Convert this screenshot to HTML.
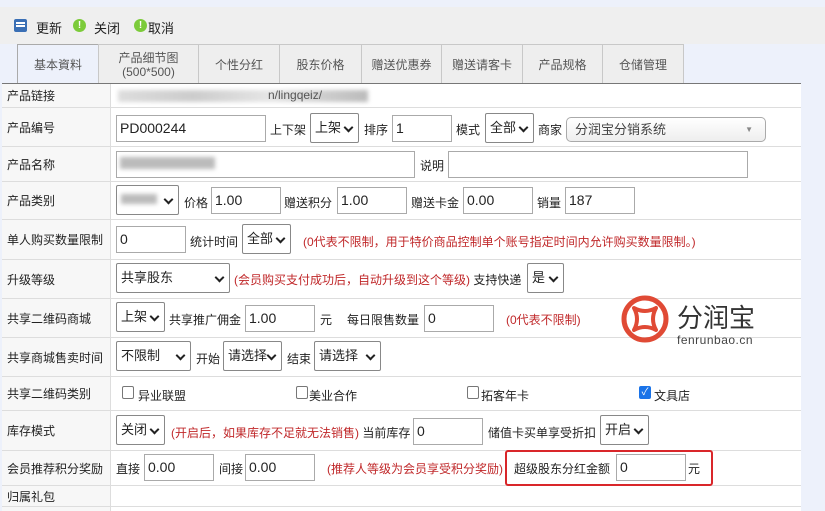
<!DOCTYPE html>
<html><head><meta charset="utf-8"><style>
*{margin:0;padding:0;box-sizing:border-box}
body{width:825px;height:511px;overflow:hidden;background:#edf1fb;font-family:"Liberation Sans","Noto Sans CJK SC",sans-serif;font-size:12px;color:#222;position:relative}
.a{position:absolute;white-space:nowrap}
.tb{left:0;top:7px;width:825px;height:37px;background:#efefef}
.tab{position:absolute;top:44px;height:40px;background:#eee;border:1px solid #c8c8c8;border-bottom:none;color:#555;font-size:12px;text-align:center;display:flex;align-items:center;justify-content:center;line-height:14px}
.tab.on{background:#edf1fb;border-color:#aaa}
.tbl{left:2px;top:83px;width:799px;height:428px;background:#fff;border-top:1px solid #777}
.row{position:absolute;left:2px;width:799px;border-bottom:1px solid #ddd}
.lab{position:absolute;left:2px;width:109px;background:#f7f7f7;border-right:1px solid #ddd;padding-left:5px;display:flex;align-items:center;font-size:12px}
.in{position:absolute;height:27px;border:1px solid #aaa;background:#fff;font-size:14px;padding-left:3px;line-height:25px}
.sel{position:absolute;height:30px;border:1px solid #888;border-radius:2px;background:#fff;font-size:13px;padding-left:4px;line-height:28px}
.sel:after{content:"";position:absolute;right:6px;top:10px;width:5px;height:5px;border-right:2px solid #222;border-bottom:2px solid #222;transform:rotate(45deg)}
.t{position:absolute;font-size:12px;white-space:nowrap}
.r{color:#c0282a}
.cb{position:absolute;width:12px;height:13px;border:1px solid #777;border-radius:2px;background:#fff}
</style></head><body>
<div class="a tb"></div>
<div class="a" style="left:14px;top:19px;width:13px;height:13px;background:#3a6fb5;border-radius:2px"><div style="margin:3px 2px;height:2px;background:#fff;box-shadow:0 3px 0 #fff"></div></div>
<div class="t" style="left:36px;top:18px;font-size:13px">更新</div>
<div class="a" style="left:73px;top:19px;width:13px;height:13px;border-radius:50%;background:#7ccb3a;color:#fff;font-size:10px;text-align:center;line-height:13px;font-weight:bold">!</div>
<div class="t" style="left:94px;top:18px;font-size:13px">关闭</div>
<div class="a" style="left:134px;top:19px;width:13px;height:13px;border-radius:50%;background:#7ccb3a;color:#fff;font-size:10px;text-align:center;line-height:13px;font-weight:bold">!</div>
<div class="t" style="left:148px;top:18px;font-size:13px">取消</div>

<div class="tab on" style="left:17px;width:82px">基本資料</div>
<div class="tab" style="left:98px;width:101px">产品细节图<br>(500*500)</div>
<div class="tab" style="left:198px;width:82px">个性分红</div>
<div class="tab" style="left:279px;width:83px">股东价格</div>
<div class="tab" style="left:361px;width:81px">赠送优惠券</div>
<div class="tab" style="left:441px;width:82px">赠送请客卡</div>
<div class="tab" style="left:522px;width:81px">产品规格</div>
<div class="tab" style="left:602px;width:82px">仓储管理</div>

<div class="a tbl"></div>
<!-- rows -->
<div class="row" style="top:84px;height:24px"></div><div class="lab" style="top:84px;height:23px">产品链接</div>
<div class="row" style="top:108px;height:39px"></div><div class="lab" style="top:108px;height:38px">产品编号</div>
<div class="row" style="top:147px;height:35px"></div><div class="lab" style="top:147px;height:34px">产品名称</div>
<div class="row" style="top:182px;height:38px"></div><div class="lab" style="top:182px;height:37px">产品类别</div>
<div class="row" style="top:220px;height:40px"></div><div class="lab" style="top:220px;height:39px">单人购买数量限制</div>
<div class="row" style="top:260px;height:39px"></div><div class="lab" style="top:260px;height:38px">升级等级</div>
<div class="row" style="top:299px;height:39px"></div><div class="lab" style="top:299px;height:38px">共享二维码商城</div>
<div class="row" style="top:338px;height:39px"></div><div class="lab" style="top:338px;height:38px">共享商城售卖时间</div>
<div class="row" style="top:377px;height:34px"></div><div class="lab" style="top:377px;height:33px">共享二维码类别</div>
<div class="row" style="top:411px;height:40px"></div><div class="lab" style="top:411px;height:39px">库存模式</div>
<div class="row" style="top:451px;height:35px"></div><div class="lab" style="top:451px;height:34px">会员推荐积分奖励</div>
<div class="row" style="top:486px;height:21px"></div><div class="lab" style="top:486px;height:20px">归属礼包</div>
<div class="lab" style="top:507px;height:4px"></div>

<!-- row 链接 blurred -->
<div class="a" style="left:118px;top:90px;width:250px;height:12px;background:linear-gradient(90deg,#ddd,#ccc 30%,#e5e5e5 60%,#bbb);filter:blur(2px)"></div>
<div class="t" style="left:268px;top:88px;color:#555">n/lingqeiz/</div>
<!-- 编号 -->
<div class="in" style="left:116px;top:115px;width:150px">PD000244</div>
<div class="t" style="left:270px;top:121px">上下架</div>
<div class="sel" style="left:310px;top:113px;width:49px">上架</div>
<div class="t" style="left:364px;top:121px">排序</div>
<div class="in" style="left:392px;top:115px;width:60px">1</div>
<div class="t" style="left:456px;top:121px">模式</div>
<div class="sel" style="left:485px;top:113px;width:49px">全部</div>
<div class="t" style="left:538px;top:121px">商家</div>
<div class="a" style="left:566px;top:117px;width:200px;height:25px;border:1px solid #aaa;border-radius:5px;background:linear-gradient(#fff,#eee);font-size:13px;padding-left:8px;line-height:23px;color:#444">分润宝分销系统<span style="position:absolute;right:12px;top:0;font-size:8px;color:#888">▼</span></div>
<!-- 名称 -->
<div class="in" style="left:116px;top:151px;width:299px"></div>
<div class="a" style="left:120px;top:157px;width:95px;height:12px;background:#bbb;filter:blur(2px)"></div>
<div class="t" style="left:420px;top:157px">说明</div>
<div class="in" style="left:448px;top:151px;width:300px"></div>
<!-- 类别 -->
<div class="sel" style="left:116px;top:185px;width:63px"><span style="display:inline-block;width:36px;height:10px;background:#bbb;filter:blur(2px)"></span></div>
<div class="t" style="left:184px;top:194px">价格</div>
<div class="in" style="left:211px;top:187px;width:70px">1.00</div>
<div class="t" style="left:284px;top:194px">赠送积分</div>
<div class="in" style="left:337px;top:187px;width:70px">1.00</div>
<div class="t" style="left:411px;top:194px">赠送卡金</div>
<div class="in" style="left:463px;top:187px;width:70px">0.00</div>
<div class="t" style="left:537px;top:194px">销量</div>
<div class="in" style="left:565px;top:187px;width:70px">187</div>
<!-- 单人 -->
<div class="in" style="left:116px;top:226px;width:70px">0</div>
<div class="t" style="left:190px;top:233px">统计时间</div>
<div class="sel" style="left:242px;top:224px;width:49px">全部</div>
<div class="t r" style="left:303px;top:233px">(0代表不限制，用于特价商品控制单个账号指定时间内允许购买数量限制。)</div>
<!-- 升级 -->
<div class="sel" style="left:116px;top:263px;width:114px">共享股东</div>
<div class="t" style="left:234px;top:271px"><span class="r">(会员购买支付成功后，自动升级到这个等级)</span> 支持快递</div>
<div class="sel" style="left:527px;top:263px;width:37px">是</div>
<!-- 商城 -->
<div class="sel" style="left:116px;top:302px;width:49px">上架</div>
<div class="t" style="left:169px;top:311px">共享推广佣金</div>
<div class="in" style="left:245px;top:305px;width:70px">1.00</div>
<div class="t" style="left:320px;top:311px">元</div>
<div class="t" style="left:347px;top:311px">每日限售数量</div>
<div class="in" style="left:424px;top:305px;width:70px">0</div>
<div class="t r" style="left:506px;top:311px">(0代表不限制)</div>
<!-- logo -->
<svg class="a" style="left:620px;top:294px" width="50" height="50" viewBox="0 0 50 50"><circle cx="25" cy="25" r="21" fill="none" stroke="#e04a35" stroke-width="5"/><path d="M14 14 Q25 20 36 14 Q30 25 36 36 Q25 30 14 36 Q20 25 14 14Z" fill="none" stroke="#e04a35" stroke-width="4" stroke-linejoin="round"/></svg>
<div class="t" style="left:677px;top:298px;font-size:26px;color:#333">分润宝</div>
<div class="t" style="left:677px;top:333px;font-size:12px;color:#444;letter-spacing:0.5px">fenrunbao.cn</div>
<!-- 售卖时间 -->
<div class="sel" style="left:116px;top:341px;width:75px">不限制</div>
<div class="t" style="left:196px;top:350px">开始</div>
<div class="sel" style="left:223px;top:341px;width:59px">请选择</div>
<div class="t" style="left:287px;top:350px">结束</div>
<div class="sel" style="left:314px;top:341px;width:67px">请选择</div>
<!-- 类别 cb -->
<div class="cb" style="left:122px;top:386px"></div><div class="t" style="left:138px;top:387px">异业联盟</div>
<div class="cb" style="left:296px;top:386px"></div><div class="t" style="left:309px;top:387px">美业合作</div>
<div class="cb" style="left:467px;top:386px"></div><div class="t" style="left:481px;top:387px">拓客年卡</div>
<div class="cb" style="left:639px;top:386px;background:#1a73e8;border-color:#1a73e8;color:#fff;font-size:10px;line-height:11px;text-align:center">✓</div><div class="t" style="left:654px;top:387px">文具店</div>
<!-- 库存 -->
<div class="sel" style="left:116px;top:415px;width:49px">关闭</div>
<div class="t" style="left:171px;top:424px"><span class="r">(开启后，如果库存不足就无法销售)</span> 当前库存</div>
<div class="in" style="left:413px;top:418px;width:70px">0</div>
<div class="t" style="left:488px;top:424px">储值卡买单享受折扣</div>
<div class="sel" style="left:600px;top:415px;width:49px">开启</div>
<!-- 会员 -->
<div class="t" style="left:116px;top:460px">直接</div>
<div class="in" style="left:144px;top:454px;width:70px">0.00</div>
<div class="t" style="left:219px;top:460px">间接</div>
<div class="in" style="left:245px;top:454px;width:70px">0.00</div>
<div class="t r" style="left:327px;top:460px">(推荐人等级为会员享受积分奖励)</div>
<div class="a" style="left:505px;top:450px;width:208px;height:36px;border:2px solid #d9262a;border-radius:3px"></div>
<div class="t" style="left:514px;top:460px">超级股东分红金额</div>
<div class="in" style="left:616px;top:454px;width:70px">0</div>
<div class="t" style="left:688px;top:460px">元</div>
</body></html>
